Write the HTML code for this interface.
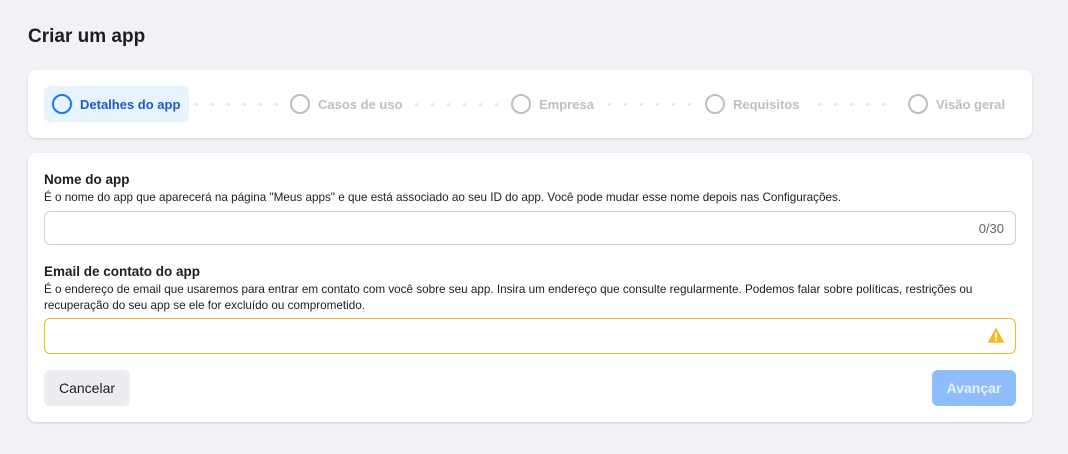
<!DOCTYPE html><html><head><style>
body{margin:0;width:1068px;height:454px;background:#f0f2f5;font-family:"Liberation Sans",sans-serif;position:relative;overflow:hidden}
.a{position:absolute}
h1{position:absolute;left:28px;top:26px;margin:0;font-size:19px;font-weight:bold;color:#1c1e21}
.card{position:absolute;left:28px;width:1004px;background:#fff;border-radius:8px;box-shadow:0 1px 2px rgba(0,0,0,.15)}
.step{position:absolute;top:24px;height:20px;display:flex;align-items:center;font-size:13px;font-weight:bold;color:#bcc0c4}
.circ{border:2px solid #bcc0c4;border-radius:50%;margin-right:8px;box-sizing:border-box;width:20px;height:20px}
.dot{position:absolute;top:33px;width:3px;height:3px;border-radius:50%;background:#e4e6eb}
.lbl{position:absolute;left:16px;font-size:13.5px;font-weight:bold;color:#1c1e21}
.desc{position:absolute;left:16px;font-size:11.7px;color:#1c1e21;line-height:16px;width:970px}
.inp{position:absolute;left:16px;width:972px;height:34px;border:1px solid #ccd0d5;border-radius:6px;box-sizing:border-box}
</style></head><body>
<h1>Criar um app</h1>
<div class="card" style="top:70px;height:68px">
<div class="a" style="left:16px;top:16px;width:145px;height:36px;background:#e7f3ff;border-radius:6px"></div>
<div class="step" style="left:24px;color:#1b5cc8"><div class="circ" style="border-color:#1877f2"></div>Detalhes do app</div>
<div class="step" style="left:262px"><div class="circ"></div>Casos de uso</div>
<div class="step" style="left:483px"><div class="circ"></div>Empresa</div>
<div class="step" style="left:677px"><div class="circ"></div>Requisitos</div>
<div class="step" style="left:880px"><div class="circ"></div>Visão geral</div>
<div id="dots"></div>
</div>
<div class="card" style="top:153px;height:269px">
<div class="lbl" style="top:19px">Nome do app</div>
<div class="desc" style="top:37px">É o nome do app que aparecerá na página "Meus apps" e que está associado ao seu ID do app. Você pode mudar esse nome depois nas Configurações.</div>
<div class="inp" style="top:58px"><span class="a" style="right:11px;top:9px;font-size:13px;color:#606770">0/30</span></div>
<div class="lbl" style="top:111px">Email de contato do app</div>
<div class="desc" style="top:129px">É o endereço de email que usaremos para entrar em contato com você sobre seu app. Insira um endereço que consulte regularmente. Podemos falar sobre políticas, restrições ou recuperação do seu app se ele for excluído ou comprometido.</div>
<div class="inp" style="top:165px;height:36px;border-color:#f7b928"><svg class="a" style="right:11px;top:9px" width="16" height="15" viewBox="0 0 16 15"><path d="M8 0.5L15.6 14.3H0.4Z" fill="#f7b928" stroke="#f7b928" stroke-linejoin="round"/><rect x="7.1" y="4.5" width="1.8" height="5.5" fill="#fff"/><rect x="7.1" y="11" width="1.8" height="1.8" fill="#fff"/></svg></div>
<div class="a" style="left:16px;top:217px;width:86px;height:36px;background:#ebedf0;border-radius:6px;font-size:14px;color:#1c1e21;text-align:center;line-height:36px">Cancelar</div>
<div class="a" style="left:904px;top:217px;width:84px;height:36px;background:#8dbdfa;border-radius:6px;font-size:14px;font-weight:bold;color:#e7f0fd;text-align:center;line-height:36px">Avançar</div>
</div>
<script>
var d=document.getElementById('dots'),h='';
[[167,252],[387,472],[580,665],[790,870]].forEach(function(r){for(var x=r[0];x<r[1];x+=16)h+='<div class="dot" style="left:'+x+'px"></div>';});
d.innerHTML=h;
</script>
</body></html>
